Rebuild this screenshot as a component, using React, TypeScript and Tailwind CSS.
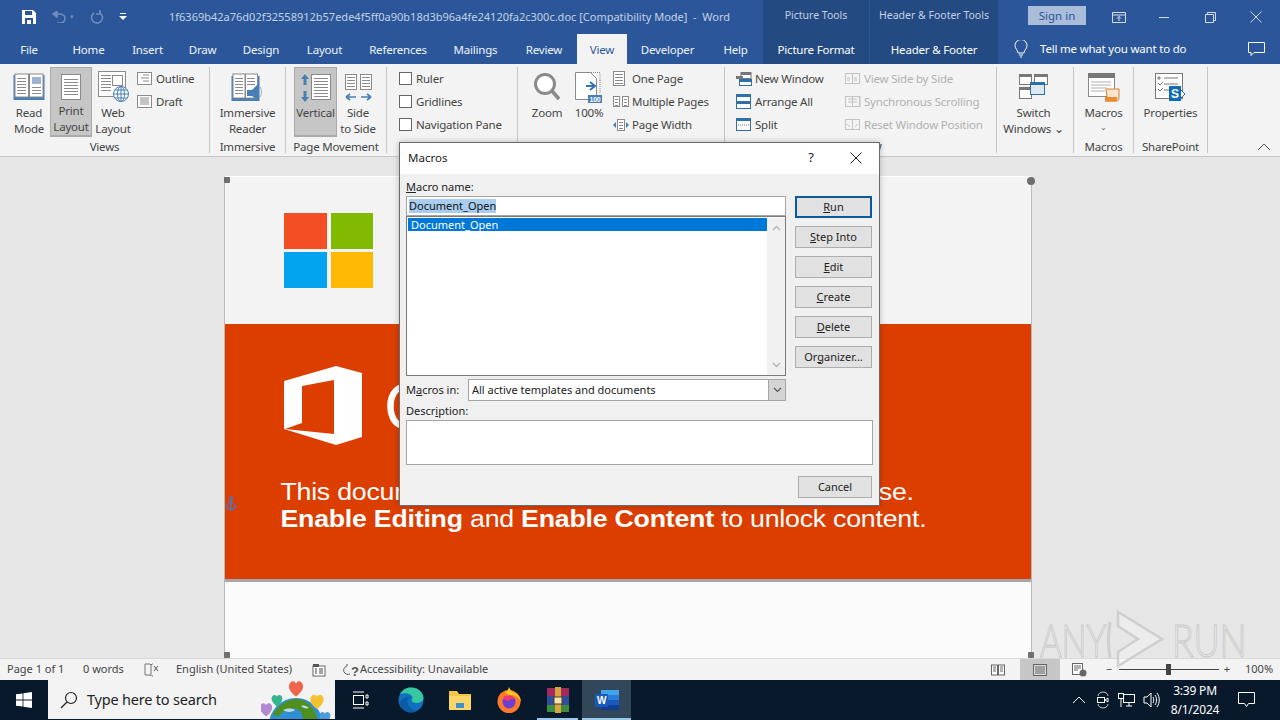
import type { ReactNode } from "react";

const Svg = ({ w, h, children }: { w: number; h: number; children: ReactNode }) => (
  <svg width={w} height={h} viewBox={`0 0 ${w} ${h}`} fill="none" className="block shrink-0">
    {children}
  </svg>
);

const Lines = ({ x, y, w, n, gap = 3, c = "#8a8a8a" }: { x: number; y: number; w: number; n: number; gap?: number; c?: string }) => (
  <>
    {Array.from({ length: n }).map((_, i) => (
      <rect key={i} x={x} y={y + i * gap} width={w} height="1" fill={c} />
    ))}
  </>
);

const ReadIcon = () => (
  <Svg w={32} h={28}>
    <rect x="0.5" y="2" width="31" height="25" fill="#4a7fb5" />
    <rect x="2" y="1" width="13.5" height="23" fill="#fff" stroke="#8a8a8a" />
    <rect x="16.5" y="1" width="13.5" height="23" fill="#fff" stroke="#8a8a8a" />
    <Lines x={4} y={5} w={9} n={6} />
    <rect x="19" y="4" width="9" height="7" fill="#9bb4cf" />
    <Lines x={19} y={14} w={9} n={3} />
  </Svg>
);
const PrintIcon = () => (
  <Svg w={22} h={28}>
    <rect x="1.5" y="1.5" width="19" height="25" fill="#fff" stroke="#8a8a8a" />
    <Lines x={4} y={6} w={14} n={6} gap={3} />
  </Svg>
);
const WebIcon = () => (
  <Svg w={32} h={32}>
    <rect x="1.5" y="0.5" width="27" height="25" fill="#fff" stroke="#8a8a8a" />
    <Lines x={4} y={4} w={10} n={6} />
    <rect x="15.5" y="4.5" width="10" height="10" stroke="#8a8a8a" />
    <circle cx="24" cy="23" r="7.5" fill="#fff" stroke="#4a7fb5" />
    <path d="M16.500 23h15M24 15.500v15M18 19h12M18 27h12" stroke="#4a7fb5" />
    <ellipse cx="24" cy="23" rx="3.500" ry="7.500" stroke="#4a7fb5" />
  </Svg>
);
const OutlineIcon = () => (
  <Svg w={15} h={14}>
    <rect x="0.5" y="0.5" width="14" height="12" fill="#fff" stroke="#8a8a8a" />
    <path d="M6 3h6M4 6h8M6 9h6" stroke="#8a8a8a" />
  </Svg>
);
const DraftIcon = () => (
  <Svg w={15} h={14}>
    <rect x="0.5" y="0.5" width="14" height="12" fill="#fff" stroke="#8a8a8a" />
    <path d="M3 3h9M3 5h9M3 7h9M3 9h9" stroke="#8a8a8a" />
  </Svg>
);
const ImmersiveIcon = () => (
  <Svg w={33} h={29}>
    <rect x="0.5" y="3" width="28" height="25" fill="#4a7fb5" />
    <rect x="2" y="1" width="12" height="24" fill="#fff" stroke="#8a8a8a" />
    <rect x="14.500" y="1" width="12" height="24" fill="#fff" stroke="#8a8a8a" />
    <Lines x={4} y={5} w={8} n={6} />
    <Lines x={16} y={5} w={8} n={3} />
    <path d="M16 17h5l6-6v17l-6-5h-5z" fill="#4a7fb5" />
    <path d="M29 14c2 3 2 7 0 10" stroke="#8fa9c5" />
  </Svg>
);
const VerticalIcon = () => (
  <Svg w={32} h={30}>
    <path d="M5 1l4 5H6.500v6h-3V6H1zM5 29l4-5H6.500v-6h-3v6H1z" fill="#4a7fb5" />
    <rect x="11.500" y="1.500" width="19" height="25" fill="#fff" stroke="#8a8a8a" />
    <Lines x={14} y={5} w={14} n={7} />
  </Svg>
);
const SideIcon = () => (
  <Svg w={27} h={27}>
    <rect x="0.5" y="0.5" width="11" height="15" fill="#fff" stroke="#8a8a8a" />
    <rect x="15.500" y="0.5" width="11" height="15" fill="#fff" stroke="#8a8a8a" />
    <Lines x={2} y={3} w={8} n={4} />
    <Lines x={17} y={3} w={8} n={4} />
    <path d="M1 23h10M1 23l4-3M1 23l4 3M26 23H16M26 23l-4-3M26 23l-4 3" stroke="#4a7fb5" strokeWidth="1.6" />
  </Svg>
);
const ZoomIcon = () => (
  <Svg w={28} h={30}>
    <circle cx="12" cy="12" r="9.500" fill="#fff" stroke="#8a8a8a" strokeWidth="3" />
    <path d="M19 19l7 8" stroke="#8a8a8a" strokeWidth="3.500" />
  </Svg>
);
const HundredIcon = () => (
  <Svg w={28} h={31}>
    <path d="M0.5 0.5h15l6 6v21h-21z" fill="#fff" stroke="#8a8a8a" />
    <path d="M16 .5h9v8M25 8v14" stroke="#8a8a8a" strokeDasharray="1 1" />
    <path d="M11 14h8M15 10l5 4-5 4" stroke="#2f75b5" strokeWidth="2" />
    <rect x="13" y="23" width="14" height="8" fill="#4a7fb5" />
    <text x="20" y="30" textAnchor="middle" fontSize="7" fontWeight="700" fill="#fff" fontFamily="Liberation Sans, sans-serif">100</text>
  </Svg>
);
const OnePageIcon = () => (
  <Svg w={12} h={15}>
    <rect x="0.5" y="0.5" width="11" height="14" fill="#fff" stroke="#8a8a8a" />
    <Lines x={2} y={3} w={8} n={4} gap={3} />
  </Svg>
);
const MultiIcon = () => (
  <Svg w={16} h={11}>
    <rect x="0.5" y="0.5" width="6" height="10" fill="#fff" stroke="#8a8a8a" />
    <rect x="9.500" y="0.5" width="6" height="10" fill="#fff" stroke="#8a8a8a" />
    <Lines x={2} y={3} w={3} n={3} />
    <Lines x={11} y={3} w={3} n={3} />
  </Svg>
);
const WidthIcon = () => (
  <Svg w={16} h={12}>
    <rect x="4.500" y="0.5" width="7" height="11" fill="#fff" stroke="#8a8a8a" />
    <Lines x={6} y={3} w={4} n={3} />
    <path d="M0 6l3-3v6zM16 6l-3-3v6z" fill="#4a7fb5" />
  </Svg>
);
const NewWindowIcon = () => (
  <Svg w={16} h={14}>
    <rect x="5" y="0.5" width="10" height="6" fill="#fff" stroke="#777" />
    <rect x="5" y="0.5" width="10" height="2.500" fill="#777" />
    <rect x="0" y="4" width="7" height="3" fill="#777" />
    <rect x="3.500" y="7.500" width="12" height="6" fill="#fff" stroke="#2f6fa8" />
    <rect x="3.500" y="7.500" width="12" height="2.500" fill="#2f6fa8" />
  </Svg>
);
const ArrangeIcon = () => (
  <Svg w={15} h={15}>
    <rect x="0.5" y="0.5" width="14" height="14" fill="#fff" stroke="#2f6fa8" />
    <rect x="0" y="0" width="15" height="3" fill="#2f6fa8" />
    <rect x="0" y="7" width="15" height="3" fill="#2f6fa8" />
  </Svg>
);
const SplitIcon = () => (
  <Svg w={15} h={13}>
    <rect x="0.5" y="0.5" width="14" height="12" fill="#fff" stroke="#2f6fa8" />
    <rect x="0" y="0" width="15" height="3" fill="#2f6fa8" />
    <path d="M2 7h11" stroke="#777" strokeDasharray="1 1" />
  </Svg>
);
const DisabledIcon = ({ kind }: { kind: number }) => (
  <Svg w={16} h={13}>
    <rect x="0.5" y="1.500" width="7" height="10" fill="#f3f3f3" stroke="#c4c4c4" />
    <rect x="7.500" y="1.500" width="7" height="10" fill="#f3f3f3" stroke="#c4c4c4" />
    {kind === 1 && <path d="M2 6h3M2 8h3M9 6h3M9 8h3" stroke="#c4c4c4" />}
    {kind === 2 && <path d="M3 4h9M3 7h9M15 1v11" stroke="#c4c4c4" />}
    {kind === 3 && <path d="M2 6l3 3M13 6l-3 3" stroke="#c4c4c4" />}
  </Svg>
);
const SwitchIcon = () => (
  <Svg w={30} h={26}>
    <rect x="0.5" y="0.5" width="12" height="10" fill="#fff" stroke="#777" />
    <rect x="0" y="0" width="13" height="3" fill="#777" />
    <rect x="15.500" y="0.5" width="13" height="10" fill="#fff" stroke="#777" />
    <rect x="15" y="0" width="14" height="3" fill="#777" />
    <rect x="0.5" y="13.500" width="12" height="11" fill="#fff" stroke="#777" />
    <rect x="0" y="13" width="13" height="3" fill="#777" />
    <rect x="11.500" y="8.500" width="14" height="12" fill="#dfe7f0" stroke="#2f6fa8" />
    <rect x="11" y="8" width="15" height="3" fill="#2f6fa8" />
  </Svg>
);
const MacrosIcon = () => (
  <Svg w={32} h={29}>
    <rect x="0.5" y="0.5" width="26" height="23" fill="#fff" stroke="#8a8a8a" />
    <rect x="0" y="0" width="27" height="5" fill="#777" />
    <path d="M3 9h20M3 12h20M3 15h16M3 18h14" stroke="#b0b0b0" />
    <path d="M18 16h13v8c0 3-1 4-3 4H17c2 0 2-2 2-4z" fill="#fbe5d0" stroke="#d9822b" />
    <rect x="17" y="24" width="12" height="4.500" fill="#ed8b31" />
  </Svg>
);
const PropertiesIcon = () => (
  <Svg w={31} h={29}>
    <rect x="0.5" y="0.5" width="27" height="25" fill="#fff" stroke="#777" />
    <path d="M3 4h2v2H3zM9 5h14M3 10l2 2 3-3M9 11h14M3 16l2 2 3-3M9 17h6" stroke="#777" />
    <path d="M24 15l6 6-6 6z" fill="#fff" stroke="#1a6fb0" />
    <rect x="14" y="13" width="12" height="15" fill="#0f6cb5" />
    <text x="20" y="25" textAnchor="middle" fontSize="12" fontWeight="700" fill="#fff" fontFamily="Liberation Sans, sans-serif">S</text>
  </Svg>
);

const BigButton = ({ icon, lines, w, active, caret }: { icon: ReactNode; lines: string[]; w: string; active?: boolean; caret?: boolean }) => (
  <div className={`${w} h-[70px] flex flex-col items-center shrink-0 ${active ? "bg-[#c6c6c6] border-x border-t border-b-2 border-[#aaaaaa]" : ""}`}>
    <div className={`${active ? "h-[37px]" : "h-[38px]"} flex items-center justify-center pt-[2px]`}>{icon}</div>
    {lines.map((l) => (
      <div key={l} className="h-4 leading-4 whitespace-nowrap">{l}</div>
    ))}
    {caret && <div className="h-3 leading-3 text-[8px] text-[#666]">⌄</div>}
  </div>
);

const Row = ({ icon, text, dim, iconW = "w-[19px]" }: { icon: ReactNode; text: string; dim?: boolean; iconW?: string }) => (
  <div className={`h-[23px] flex items-center whitespace-nowrap ${dim ? "text-[#b1b1b1]" : ""}`}>
    <div className={`${iconW} flex items-center justify-start shrink-0`}>{icon}</div>
    <span>{text}</span>
  </div>
);

const Check = ({ text }: { text: string }) => (
  <div className="h-[23px] flex items-center whitespace-nowrap">
    <div className="w-[13px] h-[13px] border border-[#666] bg-white mr-[4px] shrink-0" />
    <span>{text}</span>
  </div>
);

const Group = ({ w, label, pad, children }: { w: string; label: string; pad: string; children: ReactNode }) => (
  <div className={`${w} h-[86px] border-r border-[#c6c6c6] flex flex-col shrink-0`}>
    <div className={`h-[70px] flex ${pad}`}>{children}</div>
    <div className="mt-[3px] h-[14px] leading-[14px] text-center whitespace-nowrap">{label}</div>
  </div>
);

const tabs: [string, string][] = [
  ["File", "w-[58px]"],
  ["Home", "w-[61px]"],
  ["Insert", "w-[57px]"],
  ["Draw", "w-[53px]"],
  ["Design", "w-[64px]"],
  ["Layout", "w-[63px]"],
  ["References", "w-[84px]"],
  ["Mailings", "w-[71px]"],
  ["Review", "w-[66px]"],
  ["View", "w-[50px]"],
  ["Developer", "w-[81px]"],
  ["Help", "w-[55px]"],
];

const DialogButton = ({ children, primary }: { children: ReactNode; primary?: boolean }) => (
  <div
    className={`w-[77px] h-[22px] flex items-center justify-center text-[#222] ${
      primary ? "border-2 border-[#0a5a9c] bg-[#e1e1e1]" : "border border-[#adadad] bg-[#e1e1e1]"
    }`}
  >
    <span>{children}</span>
  </div>
);

const Macros = () => (
  <div className="absolute left-[399px] top-[142px] w-[481px] h-[364px] border border-[#6b6b6b] bg-[#f0f0f0] text-[11px] tracking-normal text-[#222] flex flex-col shadow-[0_0_6px_rgba(0,0,0,0.25)]">
    <div className="h-[31px] bg-white flex items-center pl-[8px] pb-[1px] text-[11.5px] shrink-0">
      <span className="flex-1">Macros</span>
      <span className="w-[20px] text-center text-[13px] mr-[29px]">?</span>
      <svg width="12" height="12" viewBox="0 0 12 12" className="mr-[17px]">
        <path d="M0.5 0.5l11 11M11.500 0.5l-11 11" stroke="#222" />
      </svg>
    </div>
    <div className="pl-[6px] pt-[5px] flex flex-col">
      <div className="h-[17px] leading-[15px]"><u>M</u>acro name:</div>
      <div className="flex gap-[9px]">
        <div className="w-[380px]">
          <div className="h-[20px] bg-white border border-[#a5a5a5] flex items-center pl-[2px]">
            <span className="bg-[#a8cdee] leading-[14px] text-[#111]">Document_Open</span>
          </div>
          <div className="h-[160px] bg-white border border-[#7a7a7a] flex pl-px pt-px">
            <div className="flex-1">
              <div className="h-[13px] bg-[#0078d7] text-white leading-[13px] pl-[3px]">Document_Open</div>
            </div>
            <div className="w-[18px] bg-[#f0f0f0] flex flex-col items-center justify-between py-[7px]">
              <svg width="9" height="6" viewBox="0 0 9 6"><path d="M1 5l3.500-3.500L8 5" stroke="#b5b5b5" strokeWidth="1.3" fill="none" /></svg>
              <svg width="9" height="6" viewBox="0 0 9 6"><path d="M1 1l3.500 3.500L8 1" stroke="#b5b5b5" strokeWidth="1.3" fill="none" /></svg>
            </div>
          </div>
        </div>
        <div className="flex flex-col gap-[8px]">
          <DialogButton primary><u>R</u>un</DialogButton>
          <DialogButton><u>S</u>tep Into</DialogButton>
          <DialogButton><u>E</u>dit</DialogButton>
          <DialogButton><u>C</u>reate</DialogButton>
          <DialogButton><u>D</u>elete</DialogButton>
          <DialogButton>Or<u>g</u>anizer...</DialogButton>
        </div>
      </div>
      <div className="flex items-center h-[22px] mt-[3px] w-[380px]">
        <span className="w-[62px]">M<u>a</u>cros in:</span>
        <div className="flex-1 h-[22px] bg-white border border-[#a5a5a5] flex items-center pl-[3px]">
          <span className="flex-1">All active templates and documents</span>
          <div className="w-[17px] h-[20px] bg-[#d4d4d4] border-l border-[#a5a5a5] flex items-center justify-center">
            <svg width="9" height="6" viewBox="0 0 9 6"><path d="M1 1l3.500 3.500L8 1" stroke="#555" strokeWidth="1.2" fill="none" /></svg>
          </div>
        </div>
      </div>
      <div className="h-[19px] leading-[19px]">Descr<u>i</u>ption:</div>
      <div className="w-[467px] h-[45px] bg-white border border-[#a5a5a5]" />
      <div className="w-[466px] mt-[11px] flex justify-end">
        <div className="w-[74px] h-[22px] bg-[#e1e1e1] border border-[#adadad] flex items-center justify-center">Cancel</div>
      </div>
    </div>
  </div>
);

const Handle = ({ cls }: { cls: string }) => <div className={`absolute w-[6px] h-[6px] bg-[#6f6f6f] ${cls}`} />;

const Page = () => (
  <div className="relative ml-[224px] mt-[19px] w-[808px] h-[482px] border-x border-[#b9b9b9] border-t border-t-white flex flex-col shrink-0 font-['Liberation_Sans',sans-serif]">
    <div className="h-[147px] bg-[#f3f3f4] pl-[59px] pt-[36px] shrink-0">
      <div className="grid grid-cols-[43px_42px] grid-rows-[36px_36px] gap-x-[4px] gap-y-[3px] w-[89px]">
        <div className="bg-[#f25022]" />
        <div className="bg-[#80ba01]" />
        <div className="bg-[#02a4ef]" />
        <div className="bg-[#ffb902]" />
      </div>
    </div>
    <div className="h-[255px] bg-[#dc3e00] pl-[59px] pt-[42px] text-white shrink-0">
      <div className="flex items-center h-[79px]">
        <svg width="78" height="79" viewBox="0 0 78 79" className="shrink-0">
          <path fillRule="evenodd" fill="#fff" d="M0 15L52 0l26 7v64l-26 8L0 63zM18 20l32-6v54L1 63l17-6z" />
        </svg>
        <span className="ml-[22px] text-[68px] leading-none">Office</span>
      </div>
      <div className="pl-[6px] mt-[34px] text-[23px] leading-[27px] origin-[65px_0] scale-x-[1.162]">
        <div className="flex justify-between w-[545px]">
          <span>This document</span>
          <span>use.</span>
        </div>
        <div className="whitespace-nowrap">
          <b>Enable Editing</b> and <b>Enable Content</b> to unlock content.
        </div>
      </div>
    </div>
    <div className="h-[3px] bg-[#a6a6a6] shrink-0" />
    <div className="flex-1 bg-[#fbfbfb]" />
    <Handle cls="left-[-1px] top-0 rounded-[1px]" />
    <Handle cls="right-[-4px] top-0 rounded-full w-[8px] h-[8px]" />
    <Handle cls="left-[-1px] bottom-0 rounded-[1px]" />
    <Handle cls="right-[-3px] bottom-0 rounded-[1px]" />
    <svg width="12" height="15" viewBox="0 0 12 15" className="absolute left-0 top-[319px]">
      <circle cx="6" cy="2.500" r="1.500" stroke="#4a78c0" strokeWidth="1.3" fill="none" />
      <path d="M6 4v10M1.500 8c0 3 2 6 4.500 6s4.500-3 4.500-6M3 6.500h6" stroke="#4a78c0" strokeWidth="1.500" fill="none" />
    </svg>
  </div>
);

const Watermark = () => (
  <div className="absolute left-[1040px] top-[610px] h-[60px] flex items-center text-[46px] leading-none font-['Lato',sans-serif] font-light text-white/40 [-webkit-text-stroke:1px_#c6c6c6] pointer-events-none">
    <span className="w-[64px] origin-left scale-x-[0.72] whitespace-nowrap">ANY</span>
    <svg width="62" height="60" viewBox="0 0 62 60" className="shrink-0 mr-[6px]">
      <path d="M6 12c-2 12-2 24 0 36" stroke="#cfcfcf" strokeWidth="3" fill="none" />
      <path d="M14 2l44 27-44 27v-14l20-13-20-13z" stroke="#c8c8c8" strokeOpacity="0.8" strokeWidth="2.500" fill="#fff" fillOpacity="0.25" />
    </svg>
    <span className="w-[60px] origin-left scale-x-[0.78] whitespace-nowrap">RUN</span>
  </div>
);

const StatusBar = () => (
  <div className="h-[22px] bg-[#f3f3f3] border-t border-[#d8d8d8] flex items-center text-[11px] tracking-normal text-[#444] shrink-0 relative">
    <span className="ml-[7px] w-[76px] whitespace-nowrap">Page 1 of 1</span>
    <span className="w-[61px] whitespace-nowrap">0 words</span>
    <svg width="15" height="14" viewBox="0 0 15 14" className="shrink-0">
      <path d="M1 1h5l1 1v11l-1-1H1zM7 2l1-1h1M8 13h1" stroke="#777" fill="none" />
      <path d="M10 3l4 5M14 3l-4 5" stroke="#555" />
    </svg>
    <span className="ml-[17px] w-[136px] whitespace-nowrap">English (United States)</span>
    <svg width="14" height="14" viewBox="0 0 14 14" className="shrink-0">
      <rect x="1" y="3" width="12" height="10" fill="#fff" stroke="#666" />
      <rect x="1" y="1" width="6" height="3" fill="#555" />
      <path d="M3 6h2M7 6h4M3 8h2M7 8h4M3 10h2M7 10h4" stroke="#444" />
    </svg>
    <svg width="18" height="14" viewBox="0 0 18 14" className="ml-[16px] shrink-0">
      <path d="M5 1v2M5 3c-3 1-4 4-3 6s4 3 6 2" stroke="#555" fill="none" />
      <text x="9" y="13" fontSize="13" fontWeight="700" fill="#555" fontFamily="Liberation Sans, sans-serif">?</text>
    </svg>
    <span className="whitespace-nowrap">Accessibility: Unavailable</span>
    <div className="ml-auto flex items-center h-full">
      <svg width="14" height="12" viewBox="0 0 14 12" className="mr-[15px]">
        <rect x="0.5" y="1" width="6" height="10" fill="#fff" stroke="#666" />
        <rect x="7.500" y="1" width="6" height="10" fill="#fff" stroke="#666" />
        <path d="M2 3h3M2 5h3M2 7h3M9 3h3M9 5h3M9 7h3" stroke="#666" />
      </svg>
      <div className="w-[40px] h-full bg-[#c6c6c6] flex items-center justify-center">
        <svg width="14" height="12" viewBox="0 0 14 12">
          <rect x="0.5" y="0.5" width="13" height="11" fill="#d8d8d8" stroke="#666" />
          <path d="M2 3h10M2 5h10M2 7h10M2 9h10" stroke="#666" />
        </svg>
      </div>
      <svg width="15" height="14" viewBox="0 0 15 14" className="ml-[12px]">
        <rect x="0.5" y="0.5" width="10" height="11" fill="#fff" stroke="#666" />
        <path d="M2 3h7M2 5h7M2 7h4" stroke="#666" />
        <circle cx="11" cy="10" r="3.500" fill="#666" />
      </svg>
      <span className="ml-[18px] w-[8px] text-center">−</span>
      <div className="relative w-[100px] h-px bg-[#444] ml-[6px] mr-[4px]">
        <div className="absolute left-[47px] top-[-5px] w-[5px] h-[11px] bg-[#444]" />
      </div>
      <span className="w-[8px] text-center">+</span>
      <span className="ml-[14px] mr-[8px] w-[27px] whitespace-nowrap">100%</span>
    </div>
  </div>
);

const TaskSlot = ({ children, active, running }: { children: ReactNode; active?: boolean; running?: boolean }) => (
  <div className={`relative w-[49px] h-full flex items-center justify-center shrink-0 ${active ? "bg-[#33475a]" : ""}`}>
    {children}
    {running && <div className="absolute left-[4px] right-[4px] bottom-0 h-[2px] bg-[#9cc9ea]" />}
    {active && <div className="absolute left-0 right-0 bottom-0 h-[2px] bg-[#9cc9ea]" />}
  </div>
);

const Heart = ({ x, y, s, c }: { x: number; y: number; s: number; c: string }) => (
  <path
    transform={`translate(${x} ${y}) scale(${s})`}
    d="M0 5C-4 2-5-1-3.500-3-2-4.500-.5-4 0-2.500.5-4 2-4.500 3.500-3 5-1 4 2 0 5z"
    fill={c}
  />
);

const Taskbar = () => (
  <div className="h-10 bg-[#08192b] flex items-center text-white shrink-0">
    <div className="w-[48px] h-full flex items-center justify-center">
      <svg width="16" height="16" viewBox="0 0 16 16">
        <path d="M0 2.300l6.600-.9v6.100H0zM7.400 1.300L16 0v7.500H7.400zM0 8.500h6.600v6.100L0 13.700zM7.400 8.500H16V16l-8.600-1.200z" fill="#fff" />
      </svg>
    </div>
    <div className="relative w-[287px] h-[39px] self-start bg-[#f3f3f3] flex items-center overflow-hidden text-[#222] shrink-0">
      <svg width="18" height="18" viewBox="0 0 18 18" className="ml-[12px]">
        <circle cx="11" cy="7" r="5.500" stroke="#222" strokeWidth="1.2" fill="none" />
        <path d="M7 11l-6 6" stroke="#222" strokeWidth="1.2" />
      </svg>
      <span className="ml-[9px] text-[14.500px] whitespace-nowrap">Type here to search</span>
      <svg width="72" height="39" viewBox="0 0 72 39" className="absolute left-[213px] top-0">
        <circle cx="35" cy="45" r="27" fill="#2f8fd0" />
        <path d="M12 34c5-9 16-16 26-15 9 2 15 9 18 18v4H44c-4-6-2-9-8-12-8-2-14 2-19 8z" fill="#4f8f1e" />
        <path d="M22 30c4-2 9-2 12 0-2 2-8 3-12 0zM40 26c3-1 6 0 8 2-3 1-6 0-8-2z" fill="#bcd9ea" />
        <Heart x={16} y={20} s={1.300} c="#35b58d" />
        <Heart x={35} y={8} s={1.700} c="#f0654d" />
        <Heart x={56} y={21} s={1.600} c="#f4c12f" />
        <Heart x={5} y={29} s={1.500} c="#b08ad0" />
        <Heart x={64} y={37} s={1.300} c="#4a9bd8" />
      </svg>
    </div>
    <TaskSlot>
      <svg width="18" height="18" viewBox="0 0 18 18" className="ml-[1px]">
        <rect x="2.500" y="4.500" width="10" height="9" stroke="#fff" fill="none" />
        <path d="M2 1h11M2 17h11M15 4h2v3h-2zM15 11h2v3h-2z" stroke="#fff" />
      </svg>
    </TaskSlot>
    <div className="w-[2px]" />
    <TaskSlot>
      <svg width="26" height="26" viewBox="0 0 26 26">
        <circle cx="13" cy="13" r="12.500" fill="#0f6fc0" />
        <path d="M2 7C5 2 9 .5 13 .5c7 0 12.500 5 12.500 10.500 0 3-3 5-7 5-3 0-5-1-5-3 0-.8 1-1.500 1-3-1-3-7-5-12.500-3z" fill="#36c7a0" />
        <path d="M13 10c-4 0-5 5-2 9 2 3 5 5 9 4-3 2-6 3-9 2-5-1-9-5-9-10 3-4 8-6 11-5z" fill="#0b5aa5" />
      </svg>
    </TaskSlot>
    <TaskSlot>
      <svg width="24" height="22" viewBox="0 0 24 22">
        <path d="M1 2h8l2 3h12v16H1z" fill="#f4c542" />
        <rect x="1" y="7" width="22" height="14" fill="#fad768" />
        <rect x="8" y="14" width="8" height="5" fill="#3f8fd0" />
      </svg>
    </TaskSlot>
    <TaskSlot>
      <svg width="26" height="26" viewBox="0 0 26 26">
        <circle cx="13" cy="14.500" r="11.500" fill="#ff7a2a" />
        <path d="M13 0c1 3 3 5 6 6 4 2 6 5 6 9-2-5-6-7-10-7-3 0-5-1-6-3 2 0 3-2 4-5z" fill="#ffc422" />
        <circle cx="13" cy="15" r="6.500" fill="#6b3fd1" />
        <path d="M7 10c3-2 9-2 12 2-2-.5-5 0-6 2-2 0-5-1-6-4z" fill="#f0386b" />
      </svg>
    </TaskSlot>
    <TaskSlot running>
      <svg width="24" height="26" viewBox="0 0 24 26">
        <rect x="1" y="1" width="22" height="8" fill="#a52a5c" />
        <rect x="1" y="9" width="22" height="9" fill="#2d4f9e" />
        <rect x="1" y="18" width="22" height="7" fill="#3c8d3f" />
        <rect x="9" y="0" width="6" height="26" fill="#d9a441" />
        <rect x="8" y="10" width="8" height="7" fill="#f3e3b0" stroke="#5b3a14" />
      </svg>
    </TaskSlot>
    <TaskSlot active>
      <svg width="26" height="22" viewBox="0 0 26 22">
        <rect x="7" y="1" width="18" height="20" rx="1" fill="#2b7cd3" />
        <rect x="7" y="1" width="18" height="5" fill="#41a5ee" />
        <rect x="7" y="11" width="18" height="5" fill="#185abd" />
        <rect x="7" y="16" width="18" height="5" fill="#103f91" />
        <rect x="1" y="5" width="13" height="13" rx="1" fill="#185abd" />
        <text x="7.500" y="15" textAnchor="middle" fontSize="10" fontWeight="700" fill="#fff" fontFamily="Liberation Sans, sans-serif">W</text>
      </svg>
    </TaskSlot>
    <div className="ml-auto flex items-center h-full">
      <svg width="14" height="8" viewBox="0 0 14 8"><path d="M1 7l6-6 6 6" stroke="#fff" fill="none" /></svg>
      <svg width="14" height="18" viewBox="0 0 14 18" className="ml-[10px]">
        <path d="M2 5c0-2 2-4 5-4s5 2 5 4M2 13c0 2 2 4 5 4s5-2 5-4" stroke="#ccc" fill="none" />
        <rect x="1.500" y="6.500" width="7" height="5" stroke="#fff" fill="none" />
        <path d="M9 9l3-2v4z" stroke="#fff" fill="none" />
      </svg>
      <svg width="17" height="15" viewBox="0 0 17 15" className="ml-[8px]">
        <rect x="5.500" y="1.500" width="11" height="8" stroke="#fff" fill="none" />
        <rect x="0.5" y="0.5" width="5" height="5" fill="#08192b" stroke="#fff" />
        <path d="M8 13h6M11 10v3M3 6v8" stroke="#fff" />
      </svg>
      <svg width="17" height="16" viewBox="0 0 17 16" className="ml-[8px]">
        <path d="M1 5h3l4-4v14l-4-4H1zM10 5c1 2 1 4 0 6M12 3c2 3 2 7 0 10M14 1c3 4 3 10 0 14" stroke="#fff" fill="none" />
      </svg>
      <div className="w-[70px] text-center text-[12px] leading-[19px] text-white">
        <div>3:39 PM</div>
        <div>8/1/2024</div>
      </div>
      <svg width="18" height="17" viewBox="0 0 18 17" className="ml-[8px] mr-[24px]">
        <path d="M0.5 0.5h16v11h-6l-2 3-2-3h-6z" stroke="#fff" fill="none" />
      </svg>
    </div>
  </div>
);

export default function App() {
  return (
    <div className="relative w-[1280px] h-[720px] overflow-hidden flex flex-col bg-[#e6e6e6] font-['Noto_Sans',sans-serif] text-[11.5px] tracking-[-0.2px] text-[#444]">
      <div className="h-[34px] bg-[#2b579a] flex text-[#c3d1e6] tracking-normal shrink-0">
        <div className="w-[763px] flex items-center shrink-0">
          <svg width="14" height="14" viewBox="0 0 14 14" className="ml-[22px]">
            <path d="M0 0h11l3 3v11H0z" fill="#fff" />
            <rect x="3" y="1" width="7" height="4" fill="#2b579a" />
            <rect x="3" y="8" width="8" height="6" fill="#2b579a" />
            <rect x="5" y="10" width="4" height="4" fill="#fff" />
          </svg>
          <svg width="14" height="12" viewBox="0 0 14 12" className="ml-[16px]">
            <path d="M1 3l4-2.500V6zM3 3h5c3 0 5 2 5 4.500S11 12 8 12H5" stroke="#6e8dbd" strokeWidth="1.6" fill="none" />
          </svg>
          <span className="ml-[4px] text-[7px] text-[#6e8dbd]">▾</span>
          <svg width="14" height="14" viewBox="0 0 14 14" className="ml-[16px]">
            <path d="M10 3a5.500 5.500 0 1 1-6 0M10 0v4h-4" stroke="#6e8dbd" strokeWidth="1.6" fill="none" />
          </svg>
          <svg width="8" height="8" viewBox="0 0 8 8" className="ml-[15px]">
            <path d="M0 3h8l-4 4z" fill="#fff" />
            <rect x="1" y="0" width="6" height="1" fill="#fff" />
          </svg>
          <span className="ml-[42px] whitespace-nowrap text-[11px]">
            1f6369b42a76d02f32558912b57ede4f5ff0a90b18d3b96a4fe24120fa2c300c.doc [Compatibility Mode]&nbsp; -&nbsp; Word
          </span>
        </div>
        <div className="w-[107px] bg-[#244a82] flex items-center justify-center pb-[2px] text-[10.500px] shrink-0 border-r border-[#2b579a]">Picture Tools</div>
        <div className="w-[128px] bg-[#244a82] flex items-center justify-center pb-[2px] text-[10.500px] shrink-0 whitespace-nowrap">Header &amp; Footer Tools</div>
        <div className="ml-[30px] mt-[6px] w-[58px] h-[19px] bg-[#a9bcd9] text-[#2b579a] text-[11.500px] pt-[1px] flex items-center justify-center shrink-0">Sign in</div>
        <div className="flex-1 flex items-center text-white">
          <svg width="14" height="11" viewBox="0 0 14 11" className="ml-[26px]">
            <path d="M0.5 0.5h13v10h-13zM0.5 3h13M7 9V4.500M5 6.500l2-2 2 2" stroke="#d5deec" fill="none" />
          </svg>
          <div className="ml-[33px] w-[10px] h-px bg-[#d5deec]" />
          <svg width="11" height="11" viewBox="0 0 11 11" className="ml-[36px]">
            <path d="M0.5 2.500h8v8h-8zM2.500 2.500v-2h8v8h-2" stroke="#d5deec" fill="none" />
          </svg>
          <svg width="12" height="12" viewBox="0 0 12 12" className="ml-[34px]">
            <path d="M0.5 0.5l11 11M11.500 0.5l-11 11" stroke="#d5deec" />
          </svg>
        </div>
      </div>

      <div className="h-[30px] bg-[#2b579a] flex text-white pt-0 shrink-0">
        {tabs.map(([name, w]) => (
          <div
            key={name}
            className={`${w} h-full flex items-center justify-center pt-[1px] shrink-0 ${name === "View" ? "bg-[#f3f3f3] text-[#2b579a]" : "text-[#f0f4fa]"}`}
          >
            {name}
          </div>
        ))}
        <div className="w-[107px] bg-[#244a82] flex items-center justify-center pt-[1px] shrink-0 border-r border-[#2b579a] whitespace-nowrap">Picture Format</div>
        <div className="w-[128px] bg-[#244a82] flex items-center justify-center pt-[1px] shrink-0 whitespace-nowrap">Header &amp; Footer</div>
        <svg width="14" height="18" viewBox="0 0 14 18" className="ml-[16px] self-center shrink-0">
          <path d="M4 13c0-3-3-4-3-7.500a6 6 0 0 1 12 0C13 9 10 10 10 13zM5 15h4M6 17h2" stroke="#fff" fill="none" />
        </svg>
        <span className="ml-[12px] self-center whitespace-nowrap">Tell me what you want to do</span>
        <svg width="17" height="15" viewBox="0 0 17 15" className="ml-auto mr-[15px] self-center shrink-0">
          <path d="M0.5 0.5h16v10H6l-3 3v-3H0.500z" stroke="#fff" fill="none" />
        </svg>
      </div>

      <div className="h-[93px] bg-[#f3f3f3] border-b border-[#c6c6c6] flex items-start pt-[3px] shrink-0">
        <Group w="w-[210px]" label="Views" pad="pl-[8px]">
          <BigButton w="w-[42px]" icon={<ReadIcon />} lines={["Read", "Mode"]} />
          <BigButton w="w-[42px]" icon={<PrintIcon />} lines={["Print", "Layout"]} active />
          <BigButton w="w-[42px]" icon={<WebIcon />} lines={["Web", "Layout"]} />
          <div className="ml-[3px]">
            <Row icon={<OutlineIcon />} text="Outline" />
            <Row icon={<DraftIcon />} text="Draft" />
          </div>
        </Group>
        <Group w="w-[76px]" label="Immersive" pad="justify-center">
          <BigButton w="w-[60px]" icon={<ImmersiveIcon />} lines={["Immersive", "Reader"]} />
        </Group>
        <Group w="w-[101px]" label="Page Movement" pad="pl-[8px]">
          <BigButton w="w-[43px]" icon={<VerticalIcon />} lines={["Vertical"]} active />
          <BigButton w="w-[42px]" icon={<SideIcon />} lines={["Side", "to Side"]} />
        </Group>
        <Group w="w-[131px]" label="Show" pad="pl-[12px]">
          <div>
            <Check text="Ruler" />
            <Check text="Gridlines" />
            <Check text="Navigation Pane" />
          </div>
        </Group>
        <Group w="w-[207px]" label="Zoom" pad="pl-[11px]">
          <BigButton w="w-[36px]" icon={<ZoomIcon />} lines={["Zoom"]} />
          <div className="w-[6px] shrink-0" />
          <BigButton w="w-[36px]" icon={<HundredIcon />} lines={["100%"]} />
          <div className="ml-[6px]">
            <Row icon={<OnePageIcon />} text="One Page" />
            <Row icon={<MultiIcon />} text="Multiple Pages" />
            <Row icon={<WidthIcon />} text="Page Width" />
          </div>
        </Group>
        <Group w="w-[272px]" label="Window" pad="pl-[11px]">
          <div className="w-[109px]">
            <Row icon={<NewWindowIcon />} text="New Window" />
            <Row icon={<ArrangeIcon />} text="Arrange All" />
            <Row icon={<SplitIcon />} text="Split" />
          </div>
          <div>
            <Row dim icon={<DisabledIcon kind={1} />} text="View Side by Side" />
            <Row dim icon={<DisabledIcon kind={2} />} text="Synchronous Scrolling" />
            <Row dim icon={<DisabledIcon kind={3} />} text="Reset Window Position" />
          </div>
        </Group>
        <Group w="w-[77px]" label="" pad="justify-center pr-[3px]">
          <BigButton w="w-[70px]" icon={<SwitchIcon />} lines={["Switch", "Windows ⌄"]} />
        </Group>
        <Group w="w-[60px]" label="Macros" pad="justify-center">
          <BigButton w="w-[56px]" icon={<MacrosIcon />} lines={["Macros"]} caret />
        </Group>
        <Group w="w-[74px]" label="SharePoint" pad="justify-center">
          <BigButton w="w-[70px]" icon={<PropertiesIcon />} lines={["Properties"]} />
        </Group>
        <div className="flex-1 h-[86px] flex items-end justify-end pr-[9px] pb-[2px]">
          <svg width="14" height="8" viewBox="0 0 14 8"><path d="M1 7l6-6 6 6" stroke="#555" fill="none" /></svg>
        </div>
      </div>

      <div className="flex-1 min-h-0 overflow-hidden">
        <Page />
      </div>
      <StatusBar />
      <Taskbar />
      <Macros />
      <Watermark />
    </div>
  );
}
